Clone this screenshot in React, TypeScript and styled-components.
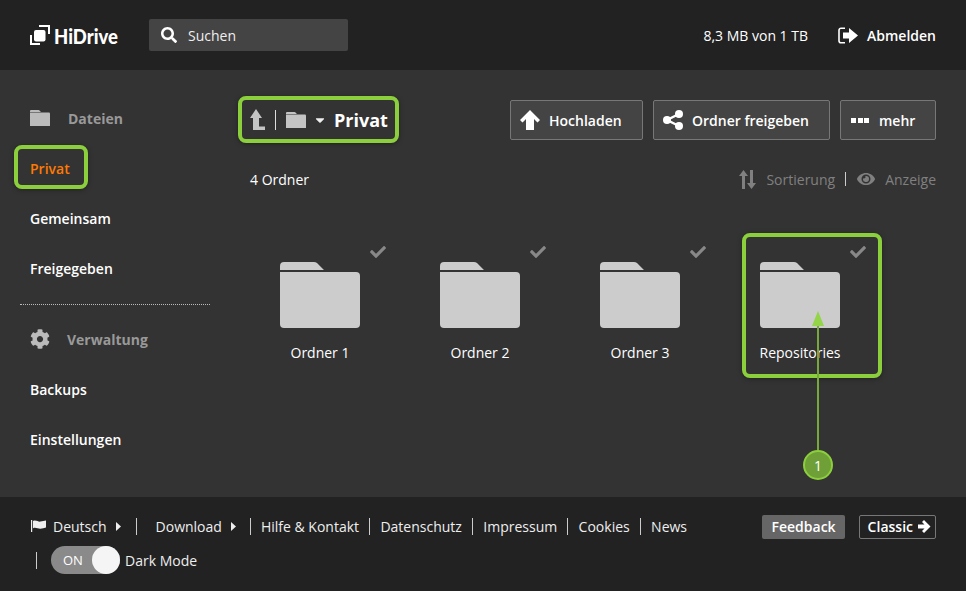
import styled, { createGlobalStyle } from 'styled-components'
import { FaSearch, FaCog, FaCheck, FaEye, FaCaretDown } from 'react-icons/fa'

const GlobalStyle = createGlobalStyle`
  html, body { margin: 0; padding: 0; height: 100%; background: #333; }
  body { font-family: "Open Sans", "Liberation Sans", sans-serif; font-size: 14px; color: #fff; overflow: hidden; }
  * { box-sizing: border-box; }
`

const Page = styled.div`
  display: grid;
  grid-template-rows: 70px 427px 94px;
  width: 966px;
  height: 591px;
`

const Header = styled.header`
  display: flex;
  align-items: center;
  padding: 0 30px;
  background: #222;
`

const Logo = styled.div`
  display: flex;
  align-items: center;
  gap: 4px;
  width: 119px;
  font-family: "Lato", sans-serif;
  font-weight: 900;
  font-size: 21px;
`

const LogoText = styled.span`
  transform: scaleX(0.88);
  transform-origin: left center;
`

const SearchBox = styled.div`
  display: flex;
  align-items: center;
  gap: 11px;
  width: 199px;
  height: 32px;
  padding-left: 12px;
  background: #444;
  border-radius: 2px;
  color: #eee;
  svg { font-size: 16px; color: #fff; }
`

const Quota = styled.span`
  margin-left: auto;
`

const Logout = styled.a`
  display: flex;
  align-items: center;
  gap: 9px;
  margin-left: 30px;
  font-weight: 600;
`

const Main = styled.main`
  display: flex;
  background: #333;
`

const Sidebar = styled.nav`
  width: 240px;
  padding: 28px 30px 0 20px;
`

const NavHeading = styled.div`
  display: flex;
  align-items: center;
  height: 40px;
  padding-left: 10px;
  color: #999;
  font-weight: 700;
  svg { flex: none; color: #bbb; }
`

const HeadingLabel = styled.span<{ $indent: number }>`
  margin-left: ${(p) => p.$indent}px;
`

const NavItem = styled.a<{ $active?: boolean }>`
  position: relative;
  display: flex;
  align-items: center;
  height: 40px;
  margin-top: 10px;
  padding-left: 10px;
  font-weight: 600;
  color: ${(p) => (p.$active ? '#ff7a00' : '#fff')};
`

const NavDivider = styled.hr`
  height: 0;
  margin: 16px 0 14px;
  border: 0;
  border-top: 1px dotted #bbb;
`

const Highlight = styled.span`
  position: absolute;
  border: 4px solid #8ccf3c;
  border-radius: 8px;
  box-shadow: 0 1px 5px rgba(0, 0, 0, 0.35);
  pointer-events: none;
`

const PrivatHighlight = styled(Highlight)`
  left: -6px;
  top: -3px;
  width: 74px;
  height: 44px;
`

const Content = styled.section`
  flex: 1;
  padding: 30px 30px 0 0;
`

const Toolbar = styled.div`
  display: flex;
  align-items: center;
  height: 40px;
`

const Crumbs = styled.div`
  position: relative;
  display: flex;
  align-items: center;
  height: 40px;
  margin-left: 9px;
  margin-right: auto;
  font-size: 18px;
  font-weight: 700;
`

const CrumbHighlight = styled(Highlight)`
  left: -11px;
  top: -4px;
  width: 161px;
  height: 47px;
`

const CrumbSep = styled.span`
  width: 1px;
  height: 20px;
  margin: 0 10px;
  background: #ddd;
`

const CrumbCaret = styled.span`
  display: flex;
  margin: 0 7px 0 7px;
  font-size: 14px;
  color: #eee;
`

const ActionButton = styled.button<{ $width: number }>`
  display: flex;
  align-items: center;
  gap: 9px;
  width: ${(p) => p.$width}px;
  height: 40px;
  margin-left: 10px;
  padding: 0 9px;
  background: #444;
  border: 1px solid #777;
  border-radius: 2px;
  color: #fff;
  font: 600 14px "Open Sans", sans-serif;
  svg { flex: none; }
`

const Dots = styled.span`
  display: flex;
  gap: 1.5px;
  margin: 0 1px 0 1px;
  i { width: 5px; height: 5px; background: #fff; }
`

const SubBar = styled.div`
  display: flex;
  align-items: center;
  height: 20px;
  margin-top: 29px;
  padding-left: 10px;
`

const ViewTools = styled.div`
  display: flex;
  align-items: center;
  margin-left: auto;
  color: #808080;
`

const ToolSep = styled.span`
  width: 1px;
  height: 14px;
  margin: 0 11px 0 10px;
  background: #ccc;
`

const ToolLabel = styled.span<{ $gap: number }>`
  margin-left: ${(p) => p.$gap}px;
`

const Grid = styled.div`
  display: flex;
  margin-top: 45px;
`

const Tile = styled.article`
  position: relative;
  display: flex;
  flex-direction: column;
  align-items: center;
  width: 160px;
  height: 143px;
  padding-top: 28px;
`

const TileCheck = styled.span`
  position: absolute;
  top: 10px;
  right: 14px;
  display: flex;
  font-size: 16px;
  color: #888;
`

const TileName = styled.span`
  margin-top: 15px;
`

const TileHighlight = styled(Highlight)`
  left: 22px;
  top: -1px;
  width: 140px;
  height: 145px;
`

const ArrowLayer = styled.svg`
  position: absolute;
  left: 90px;
  top: 76px;
`

const StepBadge = styled.span`
  position: absolute;
  left: 83px;
  top: 216px;
  display: flex;
  align-items: center;
  justify-content: center;
  width: 30px;
  height: 30px;
  border: 2px solid #8ccf3c;
  border-radius: 50%;
  background: #6f9f37;
  font-size: 14px;
  color: #fff;
`

const Footer = styled.footer`
  display: flex;
  justify-content: space-between;
  padding: 13px 30px 0;
  background: #222;
`

const FooterLinks = styled.div`
  display: flex;
  flex-wrap: wrap;
  align-items: center;
  align-content: flex-start;
  width: 670px;
  margin-top: -1px;
  color: #eee;
`

const FooterItem = styled.a`
  display: flex;
  align-items: center;
  height: 34px;
`

const Flag = styled.svg`
  margin: 0 7px 0 1px;
`

const Caret = styled.svg`
  margin-left: 9px;
`

const FooterSep = styled.span<{ $left?: number; $right?: number }>`
  width: 1px;
  height: 17px;
  margin: 0 ${(p) => p.$right ?? 10.4}px 0 ${(p) => p.$left ?? 10}px;
  background: #ccc;
`

const Toggle = styled.span`
  position: relative;
  display: flex;
  align-items: center;
  width: 69px;
  height: 28px;
  margin: 0 5px 0 4px;
  padding-left: 12px;
  border-radius: 14px;
  background: #8a8a8a;
  font-size: 13px;
  color: #fff;
`

const Knob = styled.span`
  position: absolute;
  right: 0;
  top: 0;
  width: 28px;
  height: 28px;
  border-radius: 50%;
  background: #f5f5f5;
`

const FooterButtons = styled.div`
  display: flex;
  gap: 14px;
  height: 24px;
  margin-top: 5px;
`

const FeedbackButton = styled.a`
  display: flex;
  align-items: center;
  padding: 0 9px 1px;
  border-radius: 2px;
  background: #666;
  font-weight: 600;
`

const ClassicButton = styled.a`
  display: flex;
  align-items: center;
  gap: 5px;
  padding: 0 4px 1px 8px;
  border: 1px solid #777;
  border-radius: 2px;
  font-weight: 600;
`

function LogoMark() {
  return (
    <svg width="20" height="20" viewBox="0 0 20 20" fill="none">
      <path d="M9 1h10v8" stroke="#fff" strokeWidth="2" />
      <path d="M1 10v9h9" stroke="#fff" strokeWidth="2" />
      <rect x="4" y="5" width="11.500" height="11.500" rx="2" fill="#fff" />
    </svg>
  )
}

function FolderIcon({ width, color }: { width: number; color: string }) {
  return (
    <svg width={width} viewBox="0 0 80 66" style={{ display: 'block' }}>
      <path d="M0 8V4a4 4 0 0 1 4-4h30a5 5 0 0 1 3 1l7 7z" fill={color} />
      <path d="M0 10h76a4 4 0 0 1 4 4v48a4 4 0 0 1-4 4H4a4 4 0 0 1-4-4z" fill={color} />
    </svg>
  )
}

function LogoutIcon() {
  return (
    <svg width="20" height="17" viewBox="0 0 20 17">
      <path d="M7 1.200H3A2 2 0 0 0 1 3.200v10.600a2 2 0 0 0 2 2h4" fill="none" stroke="#fff" strokeWidth="1.600" />
      <path d="M5 5.500h6V1l9 7.500-9 7.500v-4.500H5z" fill="#fff" />
    </svg>
  )
}

function UpLevelIcon() {
  return (
    <svg width="16" height="23" viewBox="0 0 16 23">
      <path d="M7 0l6 9h-3v8.500h6V21H4V9H1z" fill="#c4c4c4" />
    </svg>
  )
}

function UploadIcon() {
  return (
    <svg width="20" height="20" viewBox="0 0 20 20" fill="#fff">
      <path d="M10 0l10 10-2.500 2.500L14 9v11H6V9l-3.500 3.500L0 10z" />
    </svg>
  )
}

function ShareIcon() {
  return (
    <svg width="20" height="20" viewBox="0 0 20 20">
      <path d="M16 4L4 10l12 6" fill="none" stroke="#fff" strokeWidth="2.500" />
      <circle cx="16" cy="4" r="4" fill="#fff" />
      <circle cx="16" cy="16" r="4" fill="#fff" />
      <circle cx="4" cy="10" r="4" fill="#fff" />
    </svg>
  )
}

function SortIcon() {
  return (
    <svg width="17" height="19" viewBox="0 0 17 19" fill="#808080">
      <path d="M4.500 0L9 6H6v13H3V6H0z" />
      <path d="M11 0h3v13h3l-4.500 6L8 13h3z" />
    </svg>
  )
}

function FlagIcon() {
  return (
    <Flag width="15" height="12" viewBox="0 0 15 12">
      <path d="M0 0h1.200v12H0z" fill="#eee" />
      <path d="M2 1c3-1.400 5 1 7.500.6 2-.3 3.500-.6 5.500-1v7c-2 .6-3.500 1-5.500 1.200-2.500.2-4.500-1.800-7.500-.6z" fill="#eee" />
    </Flag>
  )
}

function CaretRight() {
  return (
    <Caret width="5" height="9" viewBox="0 0 5 9">
      <path d="M0 0l5 4.500L0 9z" fill="#eee" />
    </Caret>
  )
}

function ClassicArrow() {
  return (
    <svg width="13" height="13" viewBox="0 0 13 13" fill="#fff">
      <path d="M0 4.500h6.500L4 2l2-2 6.500 6.500L6 13l-2-2 2.500-2.500H0z" />
    </svg>
  )
}

const folders = ['Ordner 1', 'Ordner 2', 'Ordner 3', 'Repositories']

export default function App() {
  return (
    <Page>
      <GlobalStyle />
      <Header>
        <Logo>
          <LogoMark />
          <LogoText>HiDrive</LogoText>
        </Logo>
        <SearchBox>
          <FaSearch />
          Suchen
        </SearchBox>
        <Quota>8,3 MB von 1 TB</Quota>
        <Logout>
          <LogoutIcon />
          Abmelden
        </Logout>
      </Header>

      <Main>
        <Sidebar>
          <NavHeading>
            <FolderIcon width={20} color="#bbb" />
            <HeadingLabel $indent={18}>Dateien</HeadingLabel>
          </NavHeading>
          <NavItem $active>
            Privat
            <PrivatHighlight />
          </NavItem>
          <NavItem>Gemeinsam</NavItem>
          <NavItem>Freigegeben</NavItem>
          <NavDivider />
          <NavHeading>
            <FaCog size={20} />
            <HeadingLabel $indent={17}>Verwaltung</HeadingLabel>
          </NavHeading>
          <NavItem>Backups</NavItem>
          <NavItem>Einstellungen</NavItem>
        </Sidebar>

        <Content>
          <Toolbar>
            <Crumbs>
              <UpLevelIcon />
              <CrumbSep />
              <FolderIcon width={20} color="#c4c4c4" />
              <CrumbCaret>
                <FaCaretDown />
              </CrumbCaret>
              Privat
              <CrumbHighlight />
            </Crumbs>
            <ActionButton $width={133}>
              <UploadIcon />
              Hochladen
            </ActionButton>
            <ActionButton $width={177}>
              <ShareIcon />
              Ordner freigeben
            </ActionButton>
            <ActionButton $width={96}>
              <Dots>
                <i />
                <i />
                <i />
              </Dots>
              mehr
            </ActionButton>
          </Toolbar>

          <SubBar>
            4 Ordner
            <ViewTools>
              <SortIcon />
              <ToolLabel $gap={10}>Sortierung</ToolLabel>
              <ToolSep />
              <FaEye size={18} />
              <ToolLabel $gap={10}>Anzeige</ToolLabel>
            </ViewTools>
          </SubBar>

          <Grid>
            {folders.map((name, i) => (
              <Tile key={name}>
                <TileCheck>
                  <FaCheck />
                </TileCheck>
                <FolderIcon width={80} color="#ccc" />
                <TileName>{name}</TileName>
                {i === 3 && (
                  <>
                    <TileHighlight />
                    <ArrowLayer width="18" height="141" viewBox="0 0 18 141">
                      <path d="M7 15h2v125H7z" fill="#76a83b" />
                      <path d="M8 1l6 15H2z" fill="#94d448" />
                    </ArrowLayer>
                    <StepBadge>1</StepBadge>
                  </>
                )}
              </Tile>
            ))}
          </Grid>
        </Content>
      </Main>

      <Footer>
        <FooterLinks>
          <FooterItem>
            <FlagIcon />
            Deutsch
            <CaretRight />
          </FooterItem>
          <FooterSep $left={15} $right={19} />
          <FooterItem>
            Download
            <CaretRight />
          </FooterItem>
          <FooterSep $left={14} $right={10} />
          <FooterItem>Hilfe &amp; Kontakt</FooterItem>
          <FooterSep />
          <FooterItem>Datenschutz</FooterItem>
          <FooterSep />
          <FooterItem>Impressum</FooterItem>
          <FooterSep />
          <FooterItem>Cookies</FooterItem>
          <FooterSep />
          <FooterItem>News</FooterItem>
          <FooterSep $left={6} $right={10} />
          <Toggle>
            ON
            <Knob />
          </Toggle>
          <FooterItem>Dark Mode</FooterItem>
        </FooterLinks>
        <FooterButtons>
          <FeedbackButton>Feedback</FeedbackButton>
          <ClassicButton>
            Classic
            <ClassicArrow />
          </ClassicButton>
        </FooterButtons>
      </Footer>
    </Page>
  )
}
